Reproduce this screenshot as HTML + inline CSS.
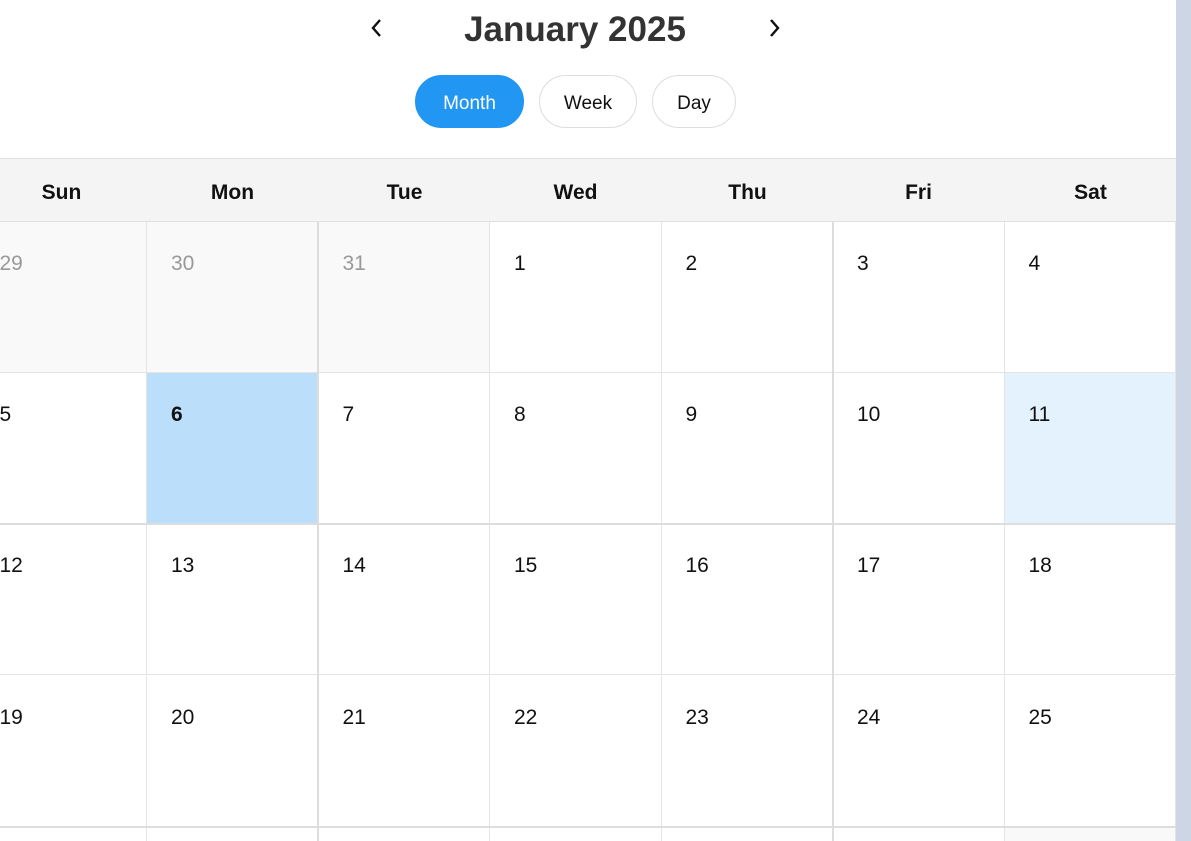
<!DOCTYPE html>
<html><head><style>
html,body{margin:0;width:1191px;height:841px;overflow:hidden}
body{background:#fff;font-family:"Liberation Sans",sans-serif;position:relative}
.a{position:absolute}
.title{left:0;width:1150px;text-align:center;top:10px;font-size:35px;font-weight:bold;color:#333}
.btn{top:75px;height:53px;border:1px solid #ddd;border-radius:27px;box-sizing:border-box;text-align:center;line-height:55px;font-size:19px;color:#111}
.hd{top:158px;left:0;width:1176px;height:64px;background:#f4f4f4;border-top:1px solid #e0e0e0;border-bottom:1px solid #e0e0e0;box-sizing:border-box}
.hn{top:181px;width:171px;text-align:center;font-size:21px;font-weight:bold;color:#111}
.c{box-sizing:border-box;border-right:1px solid #e4e4e4;border-bottom:1px solid #e4e4e4;height:151px;width:171.5px;overflow:hidden}
.n{position:absolute;left:24px;top:30px;font-size:21px;color:#111}
.g{color:#999}
</style></head><body>
<div class="a title">January 2025</div>
<svg class="a" style="left:368px;top:17px" width="16" height="22"><path d="M12 3 L5 11 L12 19" fill="none" stroke="#111" stroke-width="2.4"/></svg>
<svg class="a" style="left:767px;top:17px" width="16" height="22"><path d="M4 3 L11 11 L4 19" fill="none" stroke="#111" stroke-width="2.4"/></svg>
<div class="a btn" style="left:415px;width:109px;background:#2196f3;border-color:#2196f3;color:#fff">Month</div>
<div class="a btn" style="left:539px;width:98px">Week</div>
<div class="a btn" style="left:652px;width:84px">Day</div>
<div class="a hd"></div>
<div class="a hn" style="left:-24px">Sun</div>
<div class="a hn" style="left:147px">Mon</div>
<div class="a hn" style="left:319px">Tue</div>
<div class="a hn" style="left:490px">Wed</div>
<div class="a hn" style="left:662px">Thu</div>
<div class="a hn" style="left:833px">Fri</div>
<div class="a hn" style="left:1005px">Sat</div>
<div id="grid"></div>
<div class="a" style="left:1176px;top:0;width:15px;height:841px;background:#ccd6e4"></div>
<script>
var d=[[29,30,31,1,2,3,4],[5,6,7,8,9,10,11],[12,13,14,15,16,17,18],[19,20,21,22,23,24,25]];
var L=[-24.5,147,318.5,490,661.5,833,1004.5];var T=[222,373,524,676];var h='';
for(var r=0;r<4;r++)for(var c=0;c<7;c++){var bg='#fff',cls='';
if(r==0&&c<3){bg='#f9f9f9';cls='g'}
if(r==1&&c==1)bg='#bbdefb';if(r==1&&c==6)bg='#e3f2fd';
var st=(r==1&&c==1)?'font-weight:bold':'';
h+='<div class="a c" style="left:'+L[c]+'px;top:'+T[r]+'px;background:'+bg+'"><div class="n '+cls+'" style="'+st+'">'+d[r][c]+'</div></div>';}
for(var c=0;c<7;c++)h+='<div class="a" style="left:'+L[c]+'px;top:828px;width:171.5px;height:13px;box-sizing:border-box;border-right:1px solid #e4e4e4;background:'+(c==6?'#f9f9f9':'#fff')+'"></div>';
h+='<div class="a" style="left:317px;top:222px;width:2px;height:619px;background:#ddd"></div>';
h+='<div class="a" style="left:832px;top:222px;width:2px;height:619px;background:#ddd"></div>';
h+='<div class="a" style="left:0;top:523px;width:1176px;height:2px;background:#ddd"></div>';
h+='<div class="a" style="left:0;top:826px;width:1176px;height:2px;background:#ddd"></div>';
document.getElementById('grid').innerHTML=h;
</script>
</body></html>
